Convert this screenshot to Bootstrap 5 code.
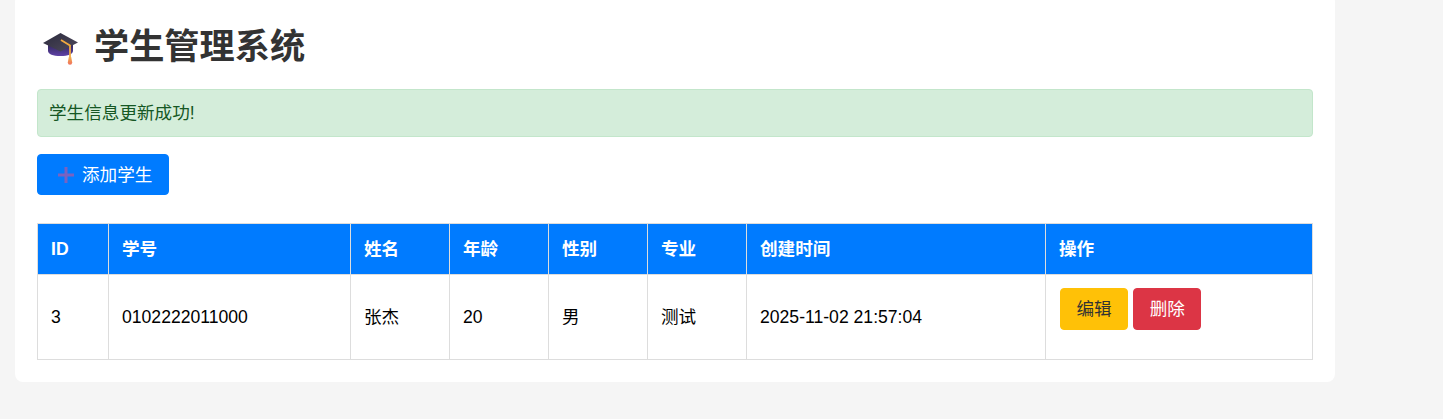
<!DOCTYPE html>
<html lang="zh-CN">
<head>
    <meta charset="UTF-8">
    <meta name="viewport" content="width=device-width, initial-scale=1.0">
    <title>学生管理系统</title>
    <link href="https://cdn.jsdelivr.net/npm/bootstrap@5.3.3/dist/css/bootstrap.min.css" rel="stylesheet">
    <style>
        body {
            font-family: "Liberation Sans", "Noto Sans CJK SC", sans-serif;
            font-size: 17.6px;
            background: #f5f5f5;
            overflow: hidden;
        }
        .page-panel {
            width: 1320px;
            margin: -6px 0 0 15px;
            padding: 32px 22px 22px;
            background: #fff;
            border-radius: 8px;
        }
        .page-title {
            font-size: 35.2px;
            font-weight: 700;
            line-height: 42px;
            color: #333;
            margin: 0 0 21px;
        }
        .page-title svg {
            margin: 0 15px 0 6px;
        }
        .msg-box {
            font-size: 17.6px;
            padding: 10px 11px;
            margin-bottom: 17px;
            border-radius: 4px;
            background: #d4edda;
            border-color: #c3e6cb;
            color: #155724;
        }
        .act-btn {
            font-size: 17.6px;
            padding: 7px 15.500px;
            border-radius: 4px;
            line-height: 26px;
        }
        .add-btn {
            background: #007bff;
            border-color: #007bff;
            padding: 6.500px 16px 6.500px 19px;
            margin-bottom: 28px;
        }
        .add-btn svg {
            margin-right: 7px;
            vertical-align: -3px;
        }
        .edit-btn {
            background: #ffc107;
            border-color: #ffc107;
            color: #333;
        }
        .del-btn {
            background: #dc3545;
            border-color: #dc3545;
        }
        .stu-table {
            table-layout: fixed;
            margin: 0;
            border-color: #ddd;
            --bs-table-color: #000;
        }
        .stu-table th {
            background: #007bff;
            color: #fff;
            font-weight: 700;
            padding: 12px 13px;
            line-height: 26px;
        }
        .stu-table td {
            padding: 12px 13px;
            height: 85px;
            vertical-align: middle;
        }
        .stu-table td.ops-cell {
            vertical-align: top;
            padding: 13px 14px;
        }
        .ops-gap {
            gap: 5px;
        }
        .w-id { width: 71px; }
        .w-no { width: 242px; }
        .w-sm { width: 99px; }
        .w-time { width: 299px; }
    </style>
</head>
<body>
    <div class="page-panel">
        <h1 class="page-title d-flex align-items-center">
            <svg width="36" height="36" viewBox="0 0 36 36" aria-hidden="true">
                <defs>
                    <linearGradient id="capTop" x1="0" y1="0" x2="1" y2="1">
                        <stop offset="0" stop-color="#2b2a3d"/>
                        <stop offset="1" stop-color="#4f4a5c"/>
                    </linearGradient>
                    <linearGradient id="capBody" x1="0" y1="0" x2="0" y2="1">
                        <stop offset="0" stop-color="#2f2658"/>
                        <stop offset="1" stop-color="#5f42a6"/>
                    </linearGradient>
                    <linearGradient id="tassel" x1="0" y1="0" x2="0" y2="1">
                        <stop offset="0" stop-color="#f2b04a"/>
                        <stop offset="1" stop-color="#f0705f"/>
                    </linearGradient>
                </defs>
                <path d="M5 15v7c0 3 5 5 12.500 5S30 25 30 22v-7z" fill="url(#capBody)"/>
                <path d="M17.500 4 35 13.500 17.500 22.500 0 14z" fill="url(#capTop)"/>
                <path d="M18 11 27 16.500V29" fill="none" stroke="#f2a93f" stroke-width="1.800"/>
                <path d="M25.800 28h2.400l1 5.500a2.200 2.200 0 0 1-4.400 0z" fill="url(#tassel)"/>
            </svg>
            学生管理系统
        </h1>
        <div class="alert alert-success msg-box">学生信息更新成功!</div>
        <button class="btn btn-primary act-btn add-btn d-block">
            <svg width="18" height="18" viewBox="0 0 18 18" aria-hidden="true">
                <path d="M7.500 1h3v6.500H17v3h-6.500V17h-3v-6.500H1v-3h6.500z" fill="#7a62c0"/>
            </svg>添加学生
        </button>
        <table class="table table-bordered stu-table">
            <thead>
                <tr>
                    <th class="w-id">ID</th>
                    <th class="w-no">学号</th>
                    <th class="w-sm">姓名</th>
                    <th class="w-sm">年龄</th>
                    <th class="w-sm">性别</th>
                    <th class="w-sm">专业</th>
                    <th class="w-time">创建时间</th>
                    <th>操作</th>
                </tr>
            </thead>
            <tbody>
                <tr>
                    <td>3</td>
                    <td>0102222011000</td>
                    <td>张杰</td>
                    <td>20</td>
                    <td>男</td>
                    <td>测试</td>
                    <td>2025-11-02 21:57:04</td>
                    <td class="ops-cell">
                        <div class="d-flex ops-gap">
                            <button class="btn act-btn edit-btn">编辑</button>
                            <button class="btn btn-danger act-btn del-btn">删除</button>
                        </div>
                    </td>
                </tr>
            </tbody>
        </table>
    </div>
    <script src="https://cdn.jsdelivr.net/npm/bootstrap@5.3.3/dist/js/bootstrap.bundle.min.js"></script>
</body>
</html>
